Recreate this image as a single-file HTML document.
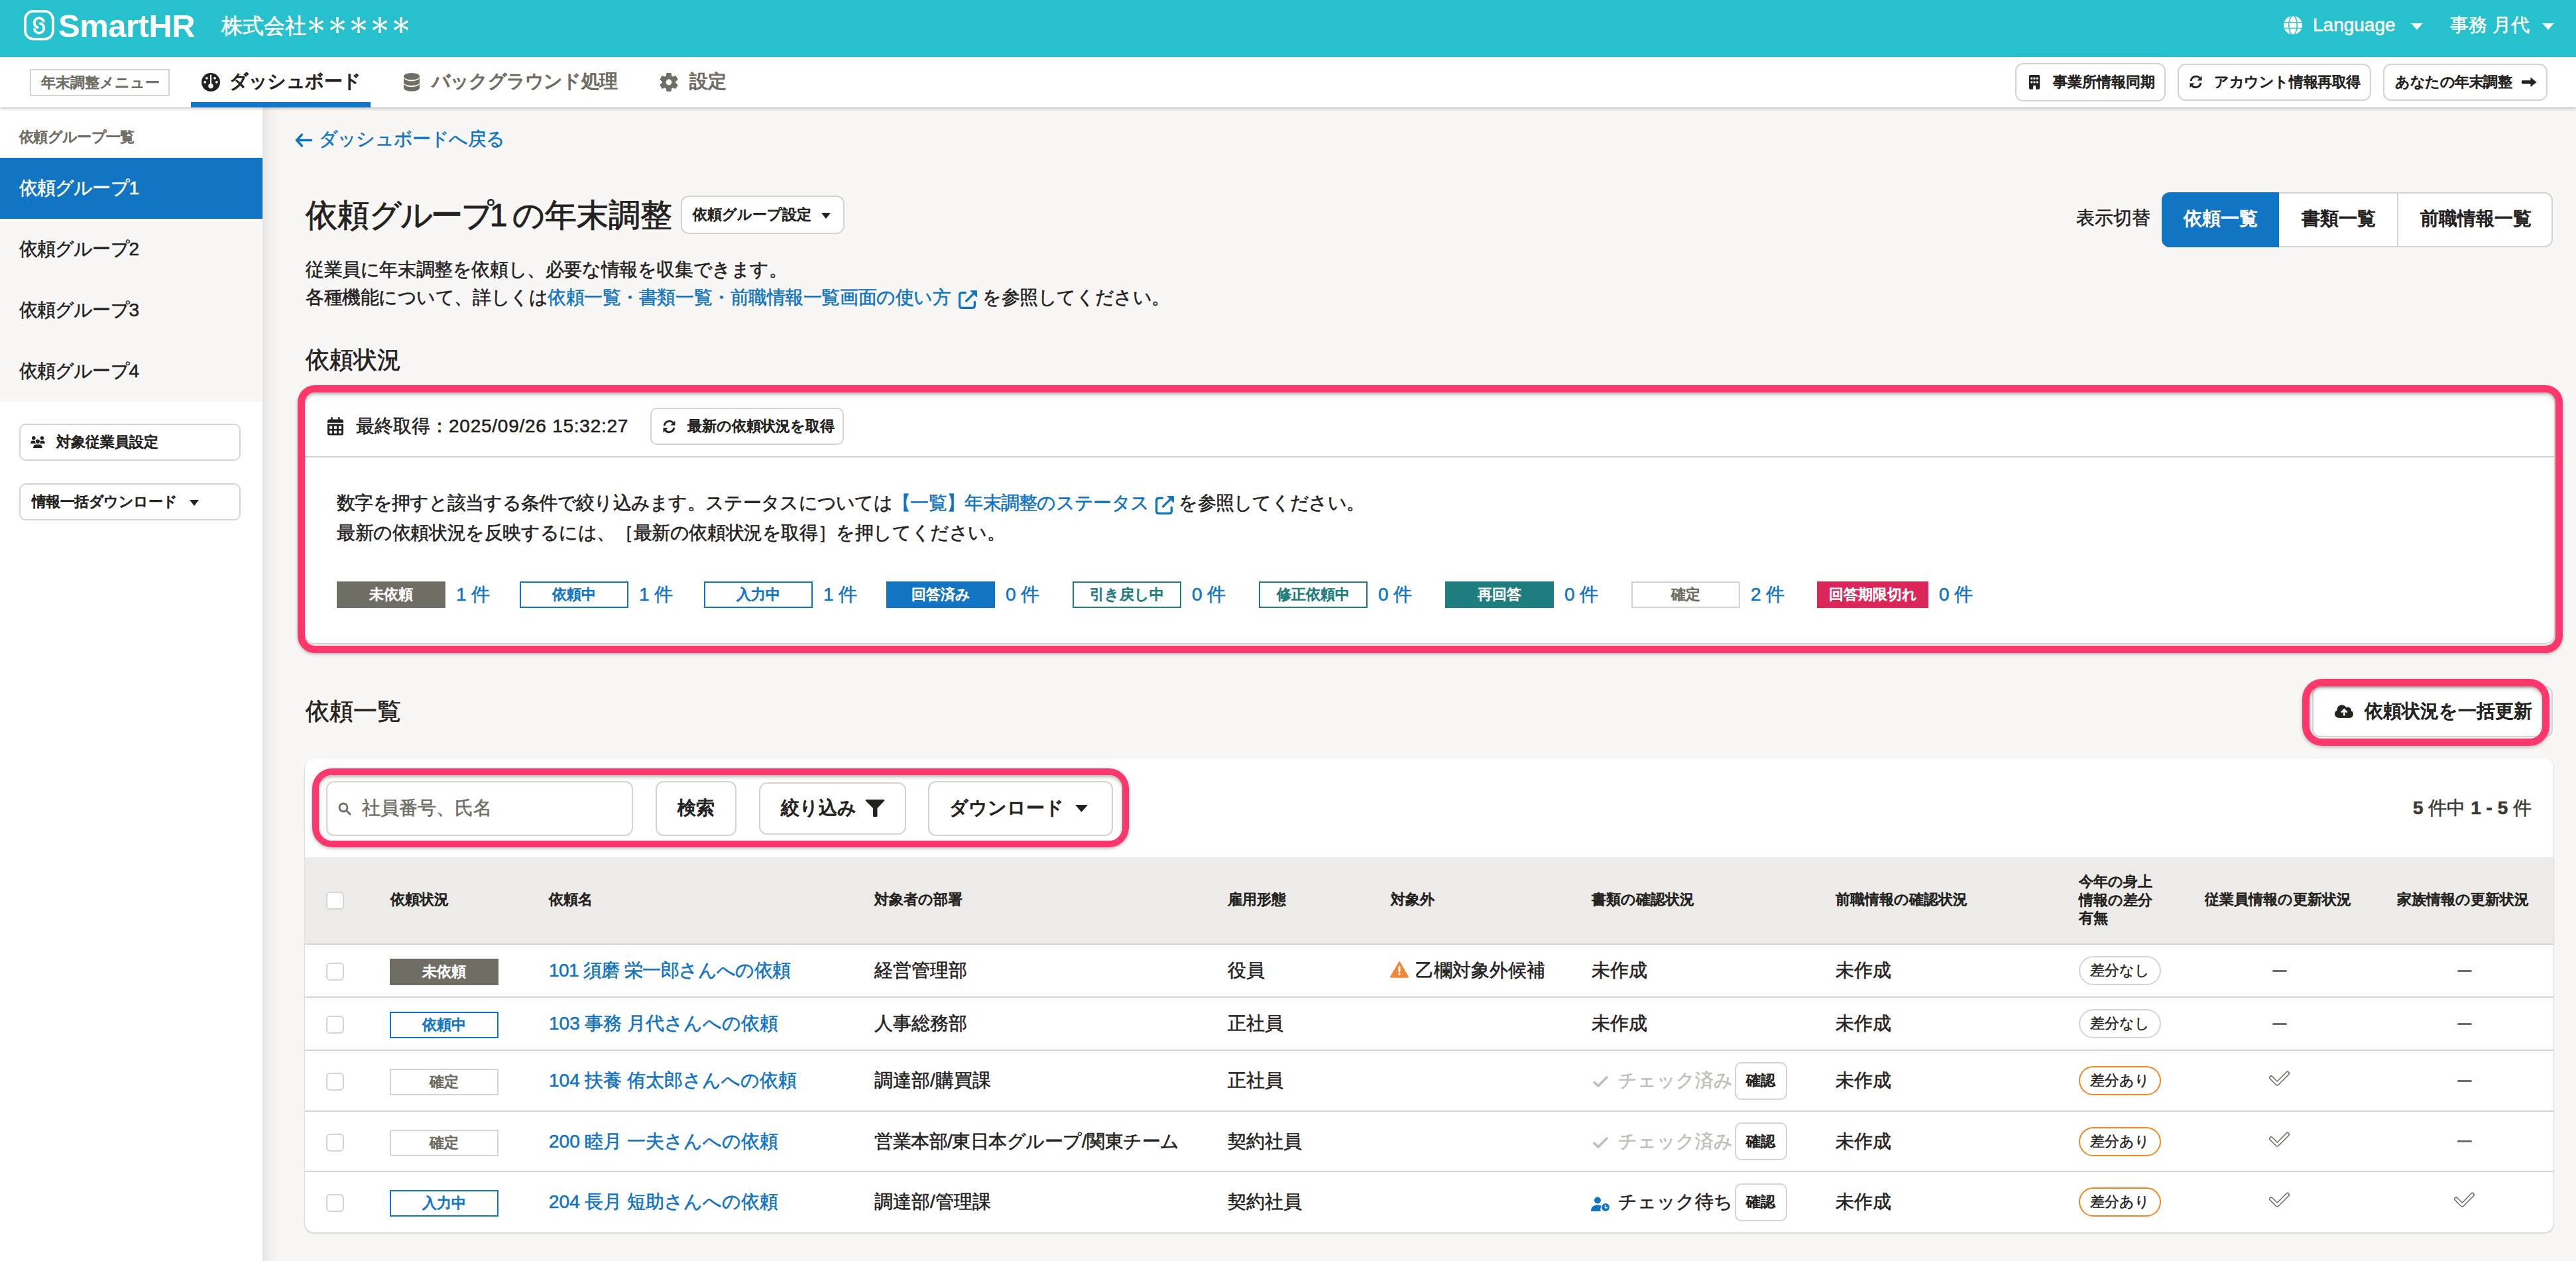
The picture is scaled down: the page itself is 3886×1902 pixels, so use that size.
<!DOCTYPE html><html lang="ja"><head><meta charset="utf-8"><style>
html,body{margin:0;padding:0;width:3886px;height:1902px;overflow:hidden;background:#f8f7f6;font-family:"Liberation Sans",sans-serif;}
.a{position:absolute;}
.t{white-space:nowrap;}
</style></head><body>
<div class="a" style="left:0px;top:162px;width:396.0px;height:1740.0px;background:#fff;"></div>
<div class="a t" style="left:29px;top:192.0px;font-size:22px;line-height:30px;font-weight:700;color:#706d65;font-weight:400;-webkit-text-stroke:1.10px currentColor;letter-spacing:-0.7px;">依頼グループ一覧</div>
<div class="a" style="left:0px;top:238px;width:396.0px;height:368.0px;background:#f8f7f6;"></div>
<div class="a" style="left:0px;top:238px;width:396.0px;height:92.0px;background:#1275c4;"></div>
<div class="a t" style="left:29px;top:266.0px;font-size:28px;line-height:36px;font-weight:400;color:#fff;-webkit-text-stroke:0.56px currentColor;letter-spacing:-0.9px;">依頼グループ1</div>
<div class="a t" style="left:29px;top:358.0px;font-size:28px;line-height:36px;font-weight:400;color:#23221e;-webkit-text-stroke:0.56px currentColor;letter-spacing:-0.9px;">依頼グループ2</div>
<div class="a t" style="left:29px;top:450.0px;font-size:28px;line-height:36px;font-weight:400;color:#23221e;-webkit-text-stroke:0.56px currentColor;letter-spacing:-0.9px;">依頼グループ3</div>
<div class="a t" style="left:29px;top:542.0px;font-size:28px;line-height:36px;font-weight:400;color:#23221e;-webkit-text-stroke:0.56px currentColor;letter-spacing:-0.9px;">依頼グループ4</div>
<div class="a" style="left:29px;top:639px;width:334.0px;height:56.0px;background:#fff;border:2px solid #d6d3d0;border-radius:10px;box-sizing:border-box;"></div>
<svg class="a" style="left:46px;top:657px;" width="22" height="19" viewBox="0 0 22 19"><g fill="#23221e"><circle cx="4.8" cy="3.8" r="2.8"/><circle cx="17.4" cy="3.8" r="2.7"/><path d="M2.2 7.8H6.4Q7.2 7.8 7.5 8.6L8.6 11.9H0L1.1 8.6Q1.4 7.8 2.2 7.8Z"/><path d="M15.6 7.8H19.8Q20.6 7.8 20.9 8.6L22 11.9H13.4L14.5 8.6Q14.8 7.8 15.6 7.8Z"/><circle cx="10.9" cy="8.8" r="3.1" stroke="#fff" stroke-width="1.6" paint-order="stroke"/><path d="M7.8 13.4H14Q16.2 13.4 17 15.6L18 18.9H3.8L4.8 15.6Q5.6 13.4 7.8 13.4Z" stroke="#fff" stroke-width="1.6" paint-order="stroke"/></g></svg>
<div class="a t" style="left:85px;top:652.0px;font-size:22px;line-height:30px;font-weight:700;color:#23221e;font-weight:400;-webkit-text-stroke:1.10px currentColor;">対象従業員設定</div>
<div class="a" style="left:29px;top:729px;width:334.0px;height:56.0px;background:#fff;border:2px solid #d6d3d0;border-radius:10px;box-sizing:border-box;"></div>
<div class="a t" style="left:48px;top:742.0px;font-size:22px;line-height:30px;font-weight:700;color:#23221e;font-weight:400;-webkit-text-stroke:1.10px currentColor;letter-spacing:-0.55px;">情報一括ダウンロード</div>
<svg class="a" style="left:286px;top:754px;" width="14" height="9" viewBox="0 0 14 9"><path d="M0 0H14L7.0 9Z" fill="#23221e"/></svg>
<div class="a" style="left:396px;top:162px;width:34.0px;height:1740.0px;background:linear-gradient(to right, rgba(0,0,0,0.07), rgba(0,0,0,0.02) 40%, rgba(0,0,0,0));"></div>
<svg class="a" style="left:445px;top:201px;" width="26" height="21" viewBox="0 0 26 21"><path d="M10.5 2L2.5 10.5L10.5 19M3 10.5H24.5" fill="none" stroke="#0f73c3" stroke-width="3.4" stroke-linecap="round" stroke-linejoin="round"/></svg>
<div class="a t" style="left:481px;top:192.0px;font-size:28px;line-height:36px;font-weight:400;color:#0f73c3;-webkit-text-stroke:0.56px currentColor;letter-spacing:-0.8px;">ダッシュボードへ戻る</div>
<div class="a t" style="left:461px;top:294.5px;font-size:48px;line-height:60px;font-weight:400;color:#23221e;-webkit-text-stroke:0.96px currentColor;">依頼<span style="letter-spacing:-2.3px">グループ</span><span style="margin-left:-4px">1</span><span style="margin-left:7.5px">の年末調整</span></div>
<div class="a" style="left:1027px;top:295px;width:247.0px;height:57.5px;background:#fff;border:2px solid #d6d3d0;border-radius:12px;box-sizing:border-box;"></div>
<div class="a t" style="left:1045px;top:308.5px;font-size:22px;line-height:30px;font-weight:700;color:#23221e;font-weight:400;-webkit-text-stroke:1.10px currentColor;">依頼グループ設定</div>
<svg class="a" style="left:1239px;top:321px;" width="14" height="9" viewBox="0 0 14 9"><path d="M0 0H14L7.0 9Z" fill="#23221e"/></svg>
<div class="a t" style="left:461px;top:385.5px;font-size:28px;line-height:42px;font-weight:400;color:#23221e;-webkit-text-stroke:0.56px currentColor;letter-spacing:-0.4px;">従業員に年末調整を依頼し、必要な情報を収集できます。</div>
<div class="a t" style="left:461px;top:427.5px;font-size:28px;line-height:42px;font-weight:400;color:#23221e;-webkit-text-stroke:0.56px currentColor;letter-spacing:-0.45px;">各種機能について、詳しくは<span style="color:#0f73c3">依頼一覧・書類一覧・前職情報一覧画面の使い方</span><svg width="28" height="28" viewBox="0 0 28 28" style="vertical-align:top;position:relative;top:10.25px;margin-left:12px;margin-right:8px"><path d="M10.5 3.35H5Q1.65 3.35 1.65 6.7V23Q1.65 26.35 5 26.35H21Q24.35 26.35 24.35 23V17.3" fill="none" stroke="#0f73c3" stroke-width="3.3" stroke-linecap="round"/><path d="M11.6 16L21.5 6.1" stroke="#0f73c3" stroke-width="3.3" stroke-linecap="round"/><path d="M18 0.6H27.4V10Z" fill="#0f73c3" stroke="#0f73c3" stroke-width="1" stroke-linejoin="round"/></svg>を参照してください。</div>
<div class="a t" style="left:3132px;top:311.0px;font-size:28px;line-height:36px;font-weight:400;color:#23221e;-webkit-text-stroke:0.56px currentColor;">表示切替</div>
<div class="a" style="left:3261px;top:289.5px;width:590.0px;height:83.0px;background:#fff;border:2px solid #d6d3d0;border-radius:12px;box-sizing:border-box;overflow:hidden;"></div>
<div class="a" style="left:3261px;top:289.5px;width:177.0px;height:83.0px;background:#1275c4;border-radius:12px 0 0 12px;"></div>
<div class="a" style="left:3616px;top:291.5px;width:2.0px;height:79.0px;background:#d6d3d0;"></div>
<div class="a t" style="left:3294px;top:312.0px;font-size:28px;line-height:36px;font-weight:700;color:#fff;font-weight:400;-webkit-text-stroke:1.20px currentColor;">依頼一覧</div>
<div class="a t" style="left:3472px;top:312.0px;font-size:28px;line-height:36px;font-weight:700;color:#23221e;font-weight:400;-webkit-text-stroke:1.20px currentColor;">書類一覧</div>
<div class="a t" style="left:3651px;top:312.0px;font-size:28px;line-height:36px;font-weight:700;color:#23221e;font-weight:400;-webkit-text-stroke:1.20px currentColor;">前職情報一覧</div>
<div class="a t" style="left:461px;top:519.4px;font-size:36px;line-height:48px;font-weight:400;color:#23221e;-webkit-text-stroke:0.72px currentColor;">依頼状況</div>
<div class="a" style="left:460px;top:591px;width:3393.0px;height:379.0px;background:#fff;border-radius:14px;box-shadow:0 1px 3px rgba(0,0,0,0.25);"></div>
<div class="a" style="left:460px;top:688px;width:3393.0px;height:2.0px;background:#d6d3d0;"></div>
<svg class="a" style="left:494px;top:629px;" width="24" height="28" viewBox="0 0 24 28"><path d="M0 6.5A3 3 0 0 1 3 3.5H21A3 3 0 0 1 24 6.5V8.7H0Z" fill="#23221e"/><rect x="5.2" y="0" width="2.6" height="6" rx="1.3" fill="#23221e"/><rect x="16" y="0" width="2.6" height="6" rx="1.3" fill="#23221e"/><path d="M0 10.5H24V24.6A3 3 0 0 1 21 27.6H3A3 3 0 0 1 0 24.6Z" fill="#23221e"/><g fill="#fff"><rect x="3" y="13.6" width="4.2" height="4.3" rx="1"/><rect x="9.9" y="13.6" width="4.2" height="4.3" rx="1"/><rect x="16.9" y="13.6" width="4.2" height="4.3" rx="1"/><rect x="3" y="20.5" width="4.2" height="4.3" rx="1"/><rect x="9.9" y="20.5" width="4.2" height="4.3" rx="1"/><rect x="16.9" y="20.5" width="4.2" height="4.3" rx="1"/></g></svg>
<div class="a t" style="left:537px;top:625.0px;font-size:28px;line-height:36px;font-weight:400;color:#23221e;-webkit-text-stroke:0.56px currentColor;">最終取得：<span style="letter-spacing:0.75px">2025/09/26 15:32:27</span></div>
<div class="a" style="left:981px;top:615px;width:292.0px;height:56.0px;background:#fff;border:2px solid #d6d3d0;border-radius:10px;box-sizing:border-box;"></div>
<svg class="a" style="left:999px;top:633px;" width="21" height="21" viewBox="0 0 21 21"><path d="M3.2 9A7.5 7.5 0 0 1 16.6 5.2" fill="none" stroke="#23221e" stroke-width="2.8"/><path d="M19.5 1.5V8.5H12.5Z" fill="#23221e"/><path d="M17.8 12A7.5 7.5 0 0 1 4.4 15.8" fill="none" stroke="#23221e" stroke-width="2.8"/><path d="M1.5 19.5V12.5H8.5Z" fill="#23221e"/></svg>
<div class="a t" style="left:1037px;top:628.0px;font-size:22px;line-height:30px;font-weight:700;color:#23221e;font-weight:400;-webkit-text-stroke:1.10px currentColor;">最新の依頼状況を取得</div>
<div class="a t" style="left:508px;top:736.0px;font-size:28px;line-height:45px;font-weight:400;color:#23221e;-webkit-text-stroke:0.56px currentColor;letter-spacing:-0.7px;">数字を押すと該当する条件で絞り込みます。ステータスについては<span style="color:#0f73c3">【一覧】年末調整のステータス</span><svg width="28" height="28" viewBox="0 0 28 28" style="vertical-align:top;position:relative;top:12px;margin-left:10px;margin-right:7px"><path d="M10.5 3.35H5Q1.65 3.35 1.65 6.7V23Q1.65 26.35 5 26.35H21Q24.35 26.35 24.35 23V17.3" fill="none" stroke="#0f73c3" stroke-width="3.3" stroke-linecap="round"/><path d="M11.6 16L21.5 6.1" stroke="#0f73c3" stroke-width="3.3" stroke-linecap="round"/><path d="M18 0.6H27.4V10Z" fill="#0f73c3" stroke="#0f73c3" stroke-width="1" stroke-linejoin="round"/></svg>を参照してください。</div>
<div class="a t" style="left:508px;top:781.0px;font-size:28px;line-height:45px;font-weight:400;color:#23221e;-webkit-text-stroke:0.56px currentColor;letter-spacing:-0.4px;">最新の依頼状況を反映するには、［最新の依頼状況を取得］を押してください。</div>
<div class="a" style="left:508px;top:877px;width:164.0px;height:40.0px;background:#706d65;"></div>
<div class="a t" style="left:508px;top:877px;width:164px;height:40px;line-height:40px;text-align:center;font-size:22px;font-weight:700;color:#fff;font-weight:400;-webkit-text-stroke:1.10px currentColor;">未依頼</div>
<div class="a t" style="left:688px;top:879.0px;font-size:28px;line-height:36px;font-weight:400;color:#0f73c3;-webkit-text-stroke:0.56px currentColor;">1 件</div>
<div class="a" style="left:784px;top:877px;width:164.0px;height:40.0px;background:#fff;border:2px solid #1275c4;box-sizing:border-box;"></div>
<div class="a t" style="left:784px;top:877px;width:164px;height:40px;line-height:40px;text-align:center;font-size:22px;font-weight:700;color:#1275c4;font-weight:400;-webkit-text-stroke:1.10px currentColor;">依頼中</div>
<div class="a t" style="left:964px;top:879.0px;font-size:28px;line-height:36px;font-weight:400;color:#0f73c3;-webkit-text-stroke:0.56px currentColor;">1 件</div>
<div class="a" style="left:1062px;top:877px;width:164.0px;height:40.0px;background:#fff;border:2px solid #1275c4;box-sizing:border-box;"></div>
<div class="a t" style="left:1062px;top:877px;width:164px;height:40px;line-height:40px;text-align:center;font-size:22px;font-weight:700;color:#1275c4;font-weight:400;-webkit-text-stroke:1.10px currentColor;">入力中</div>
<div class="a t" style="left:1242px;top:879.0px;font-size:28px;line-height:36px;font-weight:400;color:#0f73c3;-webkit-text-stroke:0.56px currentColor;">1 件</div>
<div class="a" style="left:1337px;top:877px;width:164.0px;height:40.0px;background:#1275c4;"></div>
<div class="a t" style="left:1337px;top:877px;width:164px;height:40px;line-height:40px;text-align:center;font-size:22px;font-weight:700;color:#fff;font-weight:400;-webkit-text-stroke:1.10px currentColor;">回答済み</div>
<div class="a t" style="left:1517px;top:879.0px;font-size:28px;line-height:36px;font-weight:400;color:#0f73c3;-webkit-text-stroke:0.56px currentColor;">0 件</div>
<div class="a" style="left:1618px;top:877px;width:164.0px;height:40.0px;background:#fff;border:2px solid #1e7d7d;box-sizing:border-box;"></div>
<div class="a t" style="left:1618px;top:877px;width:164px;height:40px;line-height:40px;text-align:center;font-size:22px;font-weight:700;color:#1e7d7d;font-weight:400;-webkit-text-stroke:1.10px currentColor;">引き戻し中</div>
<div class="a t" style="left:1798px;top:879.0px;font-size:28px;line-height:36px;font-weight:400;color:#0f73c3;-webkit-text-stroke:0.56px currentColor;">0 件</div>
<div class="a" style="left:1899px;top:877px;width:164.0px;height:40.0px;background:#fff;border:2px solid #1e7d7d;box-sizing:border-box;"></div>
<div class="a t" style="left:1899px;top:877px;width:164px;height:40px;line-height:40px;text-align:center;font-size:22px;font-weight:700;color:#1e7d7d;font-weight:400;-webkit-text-stroke:1.10px currentColor;">修正依頼中</div>
<div class="a t" style="left:2079px;top:879.0px;font-size:28px;line-height:36px;font-weight:400;color:#0f73c3;-webkit-text-stroke:0.56px currentColor;">0 件</div>
<div class="a" style="left:2180px;top:877px;width:164.0px;height:40.0px;background:#1e7d7d;"></div>
<div class="a t" style="left:2180px;top:877px;width:164px;height:40px;line-height:40px;text-align:center;font-size:22px;font-weight:700;color:#fff;font-weight:400;-webkit-text-stroke:1.10px currentColor;">再回答</div>
<div class="a t" style="left:2360px;top:879.0px;font-size:28px;line-height:36px;font-weight:400;color:#0f73c3;-webkit-text-stroke:0.56px currentColor;">0 件</div>
<div class="a" style="left:2461px;top:877px;width:164.0px;height:40.0px;background:#fff;border:2px solid #d6d3d0;box-sizing:border-box;"></div>
<div class="a t" style="left:2461px;top:877px;width:164px;height:40px;line-height:40px;text-align:center;font-size:22px;font-weight:700;color:#706d65;font-weight:400;-webkit-text-stroke:1.10px currentColor;">確定</div>
<div class="a t" style="left:2641px;top:879.0px;font-size:28px;line-height:36px;font-weight:400;color:#0f73c3;-webkit-text-stroke:0.56px currentColor;">2 件</div>
<div class="a" style="left:2741px;top:877px;width:168.0px;height:40.0px;background:#dc2659;"></div>
<div class="a t" style="left:2741px;top:877px;width:168px;height:40px;line-height:40px;text-align:center;font-size:22px;font-weight:700;color:#fff;font-weight:400;-webkit-text-stroke:1.10px currentColor;">回答期限切れ</div>
<div class="a t" style="left:2925px;top:879.0px;font-size:28px;line-height:36px;font-weight:400;color:#0f73c3;-webkit-text-stroke:0.56px currentColor;">0 件</div>
<div class="a" style="left:449px;top:581px;width:3417.0px;height:403.5px;border:11px solid #fb376c;border-radius:26px;box-sizing:border-box;box-shadow:0 2px 5px rgba(0,0,0,0.25), inset 0 3px 5px rgba(0,0,0,0.28);"></div>
<div class="a t" style="left:461px;top:1048.5px;font-size:36px;line-height:48px;font-weight:400;color:#23221e;-webkit-text-stroke:0.72px currentColor;">依頼一覧</div>
<div class="a" style="left:3488px;top:1034.5px;width:363.0px;height:77.0px;background:#fff;border:2px solid #d6d3d0;border-radius:12px;box-sizing:border-box;"></div>
<svg class="a" style="left:3522px;top:1063px;" width="28" height="20" viewBox="0 0 28 20"><g fill="#23221e"><circle cx="10.8" cy="7.4" r="7.2"/><circle cx="19.8" cy="8.6" r="5.2"/><circle cx="6" cy="13.7" r="6"/><circle cx="22.4" cy="14.2" r="5.6"/><rect x="6" y="9" width="16.5" height="10.9"/></g><path d="M14.3 16.6V7.8M10 11.6L14.3 7.3L18.6 11.6" fill="none" stroke="#fff" stroke-width="2.5" stroke-linejoin="miter"/></svg>
<div class="a t" style="left:3567px;top:1054.5px;font-size:28px;line-height:36px;font-weight:700;color:#23221e;font-weight:400;-webkit-text-stroke:1.20px currentColor;">依頼状況を一括更新</div>
<div class="a" style="left:3473px;top:1024px;width:373.0px;height:101.0px;border:11px solid #fb376c;border-radius:30px;box-sizing:border-box;box-shadow:0 2px 5px rgba(0,0,0,0.25), inset 0 3px 5px rgba(0,0,0,0.28);"></div>
<div class="a" style="left:460px;top:1144px;width:3392.0px;height:715.0px;background:#fff;border-radius:14px;box-shadow:0 1px 3px rgba(0,0,0,0.25);overflow:hidden;"></div>
<div class="a" style="left:492px;top:1178px;width:463.0px;height:82.5px;background:#fff;border:2px solid #d6d3d0;border-radius:12px;box-sizing:border-box;"></div>
<svg class="a" style="left:510px;top:1210px;" width="20" height="20" viewBox="0 0 20 20"><circle cx="8" cy="8" r="6" fill="none" stroke="#706d65" stroke-width="2.8"/><path d="M12.5 12.5L18 18" stroke="#706d65" stroke-width="3" stroke-linecap="round"/></svg>
<div class="a t" style="left:546px;top:1201.0px;font-size:28px;line-height:36px;font-weight:400;color:#706d65;-webkit-text-stroke:0.56px currentColor;">社員番号、氏名</div>
<div class="a" style="left:989px;top:1178px;width:122.0px;height:82.5px;background:#fff;border:2px solid #d6d3d0;border-radius:12px;box-sizing:border-box;"></div>
<div class="a t" style="left:1022px;top:1201.0px;font-size:28px;line-height:36px;font-weight:700;color:#23221e;font-weight:400;-webkit-text-stroke:1.20px currentColor;">検索</div>
<div class="a" style="left:1145px;top:1179.5px;width:222.0px;height:79.0px;background:#fff;border:2px solid #d6d3d0;border-radius:12px;box-sizing:border-box;"></div>
<div class="a t" style="left:1178px;top:1201.0px;font-size:28px;line-height:36px;font-weight:700;color:#23221e;font-weight:400;-webkit-text-stroke:1.20px currentColor;">絞り込み</div>
<svg class="a" style="left:1305px;top:1206px;" width="30" height="26" viewBox="0 0 30 26"><path d="M0.5 1.5A1.5 1.5 0 0 1 2 0H28A1.5 1.5 0 0 1 29.5 1.5L18.5 13V24.5A1.5 1.5 0 0 1 17 26H13.5A1.5 1.5 0 0 1 12 24.5V13Z" fill="#23221e"/></svg>
<div class="a" style="left:1400px;top:1178px;width:279.0px;height:82.5px;background:#fff;border:2px solid #d6d3d0;border-radius:12px;box-sizing:border-box;"></div>
<div class="a t" style="left:1432px;top:1201.0px;font-size:28px;line-height:36px;font-weight:700;color:#23221e;font-weight:400;-webkit-text-stroke:1.20px currentColor;">ダウンロード</div>
<svg class="a" style="left:1622px;top:1214px;" width="19" height="11" viewBox="0 0 19 11"><path d="M0 0H19L9.5 11Z" fill="#23221e"/></svg>
<div class="a" style="left:471px;top:1159px;width:1232.0px;height:119.0px;border:10.5px solid #fb376c;border-radius:30px;box-sizing:border-box;box-shadow:0 2px 5px rgba(0,0,0,0.25), inset 0 3px 5px rgba(0,0,0,0.28);"></div>
<div class="a t" style="right:67px;top:1200.5px;font-size:28px;line-height:36px;font-weight:400;color:#3b3935;text-align:right;-webkit-text-stroke:0.56px currentColor;"><b>5</b> 件中 <b>1 - 5</b> 件</div>
<div class="a" style="left:460px;top:1293px;width:3392.0px;height:131.0px;background:#edebe8;"></div>
<div class="a" style="left:460px;top:1422.5px;width:3392.0px;height:2.5px;background:#d6d3d0;"></div>
<div class="a" style="left:492px;top:1345px;width:27.0px;height:27.0px;background:#fff;border:2px solid #d6d3d0;border-radius:6px;box-sizing:border-box;"></div>
<div class="a t" style="left:589px;top:1342.0px;font-size:22px;line-height:30px;font-weight:700;color:#23221e;font-weight:400;-webkit-text-stroke:1.10px currentColor;">依頼状況</div>
<div class="a t" style="left:828px;top:1342.0px;font-size:22px;line-height:30px;font-weight:700;color:#23221e;font-weight:400;-webkit-text-stroke:1.10px currentColor;">依頼名</div>
<div class="a t" style="left:1319px;top:1342.0px;font-size:22px;line-height:30px;font-weight:700;color:#23221e;font-weight:400;-webkit-text-stroke:1.10px currentColor;">対象者の部署</div>
<div class="a t" style="left:1852px;top:1342.0px;font-size:22px;line-height:30px;font-weight:700;color:#23221e;font-weight:400;-webkit-text-stroke:1.10px currentColor;">雇用形態</div>
<div class="a t" style="left:2098px;top:1342.0px;font-size:22px;line-height:30px;font-weight:700;color:#23221e;font-weight:400;-webkit-text-stroke:1.10px currentColor;">対象外</div>
<div class="a t" style="left:2401px;top:1342.0px;font-size:22px;line-height:30px;font-weight:700;color:#23221e;font-weight:400;-webkit-text-stroke:1.10px currentColor;">書類の確認状況</div>
<div class="a t" style="left:2769px;top:1342.0px;font-size:22px;line-height:30px;font-weight:700;color:#23221e;font-weight:400;-webkit-text-stroke:1.10px currentColor;">前職情報の確認状況</div>
<div class="a t" style="left:3326px;top:1342.0px;font-size:22px;line-height:30px;font-weight:700;color:#23221e;font-weight:400;-webkit-text-stroke:1.10px currentColor;">従業員情報の更新状況</div>
<div class="a t" style="left:3616px;top:1342.0px;font-size:22px;line-height:30px;font-weight:700;color:#23221e;font-weight:400;-webkit-text-stroke:1.10px currentColor;">家族情報の更新状況</div>
<div class="a t" style="left:3136px;top:1316px;font-size:22px;line-height:27.5px;font-weight:700;color:#23221e;font-weight:400;-webkit-text-stroke:1.10px currentColor;">今年の身上<br>情報の差分<br>有無</div>
<div class="a" style="left:492px;top:1452.0px;width:27.0px;height:27.0px;background:#fff;border:2px solid #d6d3d0;border-radius:6px;box-sizing:border-box;"></div>
<div class="a" style="left:588px;top:1446.0px;width:164.0px;height:40.0px;background:#706d65;"></div>
<div class="a t" style="left:588px;top:1446.0px;width:164px;height:40px;line-height:40px;text-align:center;font-size:22px;font-weight:700;color:#fff;font-weight:400;-webkit-text-stroke:1.10px currentColor;">未依頼</div>
<div class="a t" style="left:828px;top:1446.0px;font-size:28px;line-height:36px;font-weight:400;color:#0f73c3;-webkit-text-stroke:0.56px currentColor;letter-spacing:-0.6px;">101 須磨 栄一郎さんへの依頼</div>
<div class="a t" style="left:1319px;top:1446.0px;font-size:28px;line-height:36px;font-weight:400;color:#23221e;-webkit-text-stroke:0.56px currentColor;">経営管理部</div>
<div class="a t" style="left:1852px;top:1446.0px;font-size:28px;line-height:36px;font-weight:400;color:#23221e;-webkit-text-stroke:0.56px currentColor;">役員</div>
<svg class="a" style="left:2097px;top:1450.0px;" width="28" height="25" viewBox="0 0 28 25"><path d="M14 1.5L26.8 23.5H1.2Z" fill="#f0883a" stroke="#f0883a" stroke-width="2.4" stroke-linejoin="round"/><path d="M14 8.5V15" stroke="#fff" stroke-width="3" stroke-linecap="round"/><circle cx="14" cy="19.3" r="1.7" fill="#fff"/></svg>
<div class="a t" style="left:2135px;top:1446.0px;font-size:28px;line-height:36px;font-weight:400;color:#23221e;-webkit-text-stroke:0.56px currentColor;">乙欄対象外候補</div>
<div class="a t" style="left:2401px;top:1446.0px;font-size:28px;line-height:36px;font-weight:400;color:#23221e;-webkit-text-stroke:0.56px currentColor;">未作成</div>
<div class="a t" style="left:2769px;top:1446.0px;font-size:28px;line-height:36px;font-weight:400;color:#23221e;-webkit-text-stroke:0.56px currentColor;">未作成</div>
<div class="a" style="left:3136px;top:1442.0px;width:124.0px;height:44.0px;background:#fff;border:2px solid #d6d3d0;border-radius:22px;box-sizing:border-box;"></div>
<div class="a t" style="left:3136px;top:1442.0px;width:124px;height:44px;line-height:44px;text-align:center;font-size:22px;color:#23221e;-webkit-text-stroke:0.44px currentColor;">差分なし</div>
<div class="a" style="left:3428px;top:1462.5px;width:22.0px;height:3.0px;background:#706d65;border-radius:2px;"></div>
<div class="a" style="left:3707px;top:1462.5px;width:22.0px;height:3.0px;background:#706d65;border-radius:2px;"></div>
<div class="a" style="left:460px;top:1503px;width:3392.0px;height:2.0px;background:#d6d3d0;"></div>
<div class="a" style="left:492px;top:1532.0px;width:27.0px;height:27.0px;background:#fff;border:2px solid #d6d3d0;border-radius:6px;box-sizing:border-box;"></div>
<div class="a" style="left:588px;top:1526.0px;width:164.0px;height:40.0px;background:#fff;border:2px solid #1275c4;box-sizing:border-box;"></div>
<div class="a t" style="left:588px;top:1526.0px;width:164px;height:40px;line-height:40px;text-align:center;font-size:22px;font-weight:700;color:#1275c4;font-weight:400;-webkit-text-stroke:1.10px currentColor;">依頼中</div>
<div class="a t" style="left:828px;top:1526.0px;font-size:28px;line-height:36px;font-weight:400;color:#0f73c3;-webkit-text-stroke:0.56px currentColor;">103 事務 月代さんへの依頼</div>
<div class="a t" style="left:1319px;top:1526.0px;font-size:28px;line-height:36px;font-weight:400;color:#23221e;-webkit-text-stroke:0.56px currentColor;">人事総務部</div>
<div class="a t" style="left:1852px;top:1526.0px;font-size:28px;line-height:36px;font-weight:400;color:#23221e;-webkit-text-stroke:0.56px currentColor;">正社員</div>
<div class="a t" style="left:2401px;top:1526.0px;font-size:28px;line-height:36px;font-weight:400;color:#23221e;-webkit-text-stroke:0.56px currentColor;">未作成</div>
<div class="a t" style="left:2769px;top:1526.0px;font-size:28px;line-height:36px;font-weight:400;color:#23221e;-webkit-text-stroke:0.56px currentColor;">未作成</div>
<div class="a" style="left:3136px;top:1522.0px;width:124.0px;height:44.0px;background:#fff;border:2px solid #d6d3d0;border-radius:22px;box-sizing:border-box;"></div>
<div class="a t" style="left:3136px;top:1522.0px;width:124px;height:44px;line-height:44px;text-align:center;font-size:22px;color:#23221e;-webkit-text-stroke:0.44px currentColor;">差分なし</div>
<div class="a" style="left:3428px;top:1542.5px;width:22.0px;height:3.0px;background:#706d65;border-radius:2px;"></div>
<div class="a" style="left:3707px;top:1542.5px;width:22.0px;height:3.0px;background:#706d65;border-radius:2px;"></div>
<div class="a" style="left:460px;top:1583px;width:3392.0px;height:2.0px;background:#d6d3d0;"></div>
<div class="a" style="left:492px;top:1618.0px;width:27.0px;height:27.0px;background:#fff;border:2px solid #d6d3d0;border-radius:6px;box-sizing:border-box;"></div>
<div class="a" style="left:588px;top:1612.0px;width:164.0px;height:40.0px;background:#fff;border:2px solid #d6d3d0;box-sizing:border-box;"></div>
<div class="a t" style="left:588px;top:1612.0px;width:164px;height:40px;line-height:40px;text-align:center;font-size:22px;font-weight:700;color:#706d65;font-weight:400;-webkit-text-stroke:1.10px currentColor;">確定</div>
<div class="a t" style="left:828px;top:1612.0px;font-size:28px;line-height:36px;font-weight:400;color:#0f73c3;-webkit-text-stroke:0.56px currentColor;">104 扶養 侑太郎さんへの依頼</div>
<div class="a t" style="left:1319px;top:1612.0px;font-size:28px;line-height:36px;font-weight:400;color:#23221e;-webkit-text-stroke:0.56px currentColor;">調達部/購買課</div>
<div class="a t" style="left:1852px;top:1612.0px;font-size:28px;line-height:36px;font-weight:400;color:#23221e;-webkit-text-stroke:0.56px currentColor;">正社員</div>
<svg class="a" style="left:2402px;top:1622.0px;" width="25" height="18" viewBox="0 0 25 18"><path d="M2 9.5L9 16L23 2" fill="none" stroke="#c1bdb7" stroke-width="3.6"/></svg>
<div class="a t" style="left:2441px;top:1612.0px;font-size:28px;line-height:36px;font-weight:400;color:#c1bdb7;-webkit-text-stroke:0.56px currentColor;">チェック済み</div>
<div class="a" style="left:2617px;top:1601.5px;width:79.0px;height:57.0px;background:#fff;border:2px solid #d6d3d0;border-radius:10px;box-sizing:border-box;"></div>
<div class="a t" style="left:2634px;top:1615.0px;font-size:22px;line-height:30px;font-weight:700;color:#23221e;font-weight:400;-webkit-text-stroke:1.10px currentColor;">確認</div>
<div class="a t" style="left:2769px;top:1612.0px;font-size:28px;line-height:36px;font-weight:400;color:#23221e;-webkit-text-stroke:0.56px currentColor;">未作成</div>
<div class="a" style="left:3136px;top:1608.0px;width:124.0px;height:44.0px;background:#fff;border:2px solid #f5851f;border-radius:22px;box-sizing:border-box;"></div>
<div class="a t" style="left:3136px;top:1608.0px;width:124px;height:44px;line-height:44px;text-align:center;font-size:22px;color:#23221e;-webkit-text-stroke:0.44px currentColor;">差分あり</div>
<svg class="a" style="left:3415px;top:1608.0px;" width="48" height="37" viewBox="0 0 48 37"><path d="M11.2 17.5L20.3 26.5L35.8 11" fill="none" stroke="#706d65" stroke-width="6.4" stroke-linecap="round" stroke-linejoin="round"/><path d="M11.2 17.5L20.3 26.5L35.8 11" fill="none" stroke="#fff" stroke-width="3.2" stroke-linecap="round" stroke-linejoin="round"/></svg>
<div class="a" style="left:3707px;top:1628.5px;width:22.0px;height:3.0px;background:#706d65;border-radius:2px;"></div>
<div class="a" style="left:460px;top:1675px;width:3392.0px;height:2.0px;background:#d6d3d0;"></div>
<div class="a" style="left:492px;top:1709.5px;width:27.0px;height:27.0px;background:#fff;border:2px solid #d6d3d0;border-radius:6px;box-sizing:border-box;"></div>
<div class="a" style="left:588px;top:1703.5px;width:164.0px;height:40.0px;background:#fff;border:2px solid #d6d3d0;box-sizing:border-box;"></div>
<div class="a t" style="left:588px;top:1703.5px;width:164px;height:40px;line-height:40px;text-align:center;font-size:22px;font-weight:700;color:#706d65;font-weight:400;-webkit-text-stroke:1.10px currentColor;">確定</div>
<div class="a t" style="left:828px;top:1703.5px;font-size:28px;line-height:36px;font-weight:400;color:#0f73c3;-webkit-text-stroke:0.56px currentColor;">200 睦月 一夫さんへの依頼</div>
<div class="a t" style="left:1319px;top:1703.5px;font-size:28px;line-height:36px;font-weight:400;color:#23221e;-webkit-text-stroke:0.56px currentColor;letter-spacing:-0.5px;">営業本部/東日本グループ/関東チーム</div>
<div class="a t" style="left:1852px;top:1703.5px;font-size:28px;line-height:36px;font-weight:400;color:#23221e;-webkit-text-stroke:0.56px currentColor;">契約社員</div>
<svg class="a" style="left:2402px;top:1713.5px;" width="25" height="18" viewBox="0 0 25 18"><path d="M2 9.5L9 16L23 2" fill="none" stroke="#c1bdb7" stroke-width="3.6"/></svg>
<div class="a t" style="left:2441px;top:1703.5px;font-size:28px;line-height:36px;font-weight:400;color:#c1bdb7;-webkit-text-stroke:0.56px currentColor;">チェック済み</div>
<div class="a" style="left:2617px;top:1693.0px;width:79.0px;height:57.0px;background:#fff;border:2px solid #d6d3d0;border-radius:10px;box-sizing:border-box;"></div>
<div class="a t" style="left:2634px;top:1706.5px;font-size:22px;line-height:30px;font-weight:700;color:#23221e;font-weight:400;-webkit-text-stroke:1.10px currentColor;">確認</div>
<div class="a t" style="left:2769px;top:1703.5px;font-size:28px;line-height:36px;font-weight:400;color:#23221e;-webkit-text-stroke:0.56px currentColor;">未作成</div>
<div class="a" style="left:3136px;top:1699.5px;width:124.0px;height:44.0px;background:#fff;border:2px solid #f5851f;border-radius:22px;box-sizing:border-box;"></div>
<div class="a t" style="left:3136px;top:1699.5px;width:124px;height:44px;line-height:44px;text-align:center;font-size:22px;color:#23221e;-webkit-text-stroke:0.44px currentColor;">差分あり</div>
<svg class="a" style="left:3415px;top:1699.5px;" width="48" height="37" viewBox="0 0 48 37"><path d="M11.2 17.5L20.3 26.5L35.8 11" fill="none" stroke="#706d65" stroke-width="6.4" stroke-linecap="round" stroke-linejoin="round"/><path d="M11.2 17.5L20.3 26.5L35.8 11" fill="none" stroke="#fff" stroke-width="3.2" stroke-linecap="round" stroke-linejoin="round"/></svg>
<div class="a" style="left:3707px;top:1720.0px;width:22.0px;height:3.0px;background:#706d65;border-radius:2px;"></div>
<div class="a" style="left:460px;top:1766px;width:3392.0px;height:2.0px;background:#d6d3d0;"></div>
<div class="a" style="left:492px;top:1801.0px;width:27.0px;height:27.0px;background:#fff;border:2px solid #d6d3d0;border-radius:6px;box-sizing:border-box;"></div>
<div class="a" style="left:588px;top:1795.0px;width:164.0px;height:40.0px;background:#fff;border:2px solid #1275c4;box-sizing:border-box;"></div>
<div class="a t" style="left:588px;top:1795.0px;width:164px;height:40px;line-height:40px;text-align:center;font-size:22px;font-weight:700;color:#1275c4;font-weight:400;-webkit-text-stroke:1.10px currentColor;">入力中</div>
<div class="a t" style="left:828px;top:1795.0px;font-size:28px;line-height:36px;font-weight:400;color:#0f73c3;-webkit-text-stroke:0.56px currentColor;">204 長月 短助さんへの依頼</div>
<div class="a t" style="left:1319px;top:1795.0px;font-size:28px;line-height:36px;font-weight:400;color:#23221e;-webkit-text-stroke:0.56px currentColor;">調達部/管理課</div>
<div class="a t" style="left:1852px;top:1795.0px;font-size:28px;line-height:36px;font-weight:400;color:#23221e;-webkit-text-stroke:0.56px currentColor;">契約社員</div>
<svg class="a" style="left:2400px;top:1804.7px;" width="29" height="23" viewBox="0 0 29 23"><circle cx="10" cy="5.5" r="5" fill="#1275c4"/><path d="M0 22c0-6 3.5-9.5 10-9.5c2.5 0 4.5.5 6 1.5a8 8 0 0 0 -1 8z" fill="#1275c4"/><circle cx="22" cy="16" r="6.5" fill="#1275c4" stroke="#fff" stroke-width="1.2"/><path d="M21.6 12.6V16.6H24.8" fill="none" stroke="#fff" stroke-width="1.6"/></svg>
<div class="a t" style="left:2441px;top:1795.0px;font-size:28px;line-height:36px;font-weight:400;color:#23221e;-webkit-text-stroke:0.56px currentColor;">チェック待ち</div>
<div class="a" style="left:2617px;top:1784.5px;width:79.0px;height:57.0px;background:#fff;border:2px solid #d6d3d0;border-radius:10px;box-sizing:border-box;"></div>
<div class="a t" style="left:2634px;top:1798.0px;font-size:22px;line-height:30px;font-weight:700;color:#23221e;font-weight:400;-webkit-text-stroke:1.10px currentColor;">確認</div>
<div class="a t" style="left:2769px;top:1795.0px;font-size:28px;line-height:36px;font-weight:400;color:#23221e;-webkit-text-stroke:0.56px currentColor;">未作成</div>
<div class="a" style="left:3136px;top:1791.0px;width:124.0px;height:44.0px;background:#fff;border:2px solid #f5851f;border-radius:22px;box-sizing:border-box;"></div>
<div class="a t" style="left:3136px;top:1791.0px;width:124px;height:44px;line-height:44px;text-align:center;font-size:22px;color:#23221e;-webkit-text-stroke:0.44px currentColor;">差分あり</div>
<svg class="a" style="left:3415px;top:1791.0px;" width="48" height="37" viewBox="0 0 48 37"><path d="M11.2 17.5L20.3 26.5L35.8 11" fill="none" stroke="#706d65" stroke-width="6.4" stroke-linecap="round" stroke-linejoin="round"/><path d="M11.2 17.5L20.3 26.5L35.8 11" fill="none" stroke="#fff" stroke-width="3.2" stroke-linecap="round" stroke-linejoin="round"/></svg>
<svg class="a" style="left:3694px;top:1791.0px;" width="48" height="37" viewBox="0 0 48 37"><path d="M11.2 17.5L20.3 26.5L35.8 11" fill="none" stroke="#706d65" stroke-width="6.4" stroke-linecap="round" stroke-linejoin="round"/><path d="M11.2 17.5L20.3 26.5L35.8 11" fill="none" stroke="#fff" stroke-width="3.2" stroke-linecap="round" stroke-linejoin="round"/></svg>
<div class="a" style="left:0px;top:86px;width:3886.0px;height:76.0px;background:#fff;box-shadow:0 1px 5px rgba(0,0,0,0.32);"></div>
<div class="a" style="left:0px;top:0px;width:3886.0px;height:86.0px;background:#26c1cc;"></div>
<svg class="a" style="left:36px;top:15px;" width="46" height="46" viewBox="0 0 46 46"><rect x="1.9" y="1.9" width="42" height="42" rx="12.5" fill="none" stroke="#fff" stroke-width="3.8"/><path d="M29.8 16.9A7.3 7.3 0 1 0 20.7 26.4" fill="none" stroke="#fff" stroke-width="3.8" stroke-linecap="round"/><path d="M24.8 20.4A7.3 7.3 0 1 1 15.9 29.0" fill="none" stroke="#fff" stroke-width="3.8" stroke-linecap="round"/></svg>
<div class="a t" style="left:88px;top:9.0px;font-size:49px;line-height:60px;font-weight:700;color:#fff;font-weight:400;-webkit-text-stroke:1.20px currentColor;letter-spacing:-0.5px;-webkit-text-stroke:0;font-weight:700;">SmartHR</div>
<div class="a t" style="left:334px;top:18.5px;font-size:32px;line-height:40px;font-weight:400;color:#fff;-webkit-text-stroke:0.64px currentColor;">株式会社</div>
<svg class="a" style="left:465px;top:25.799999999999997px;" width="24" height="24" viewBox="0 0 24 24"><path d="M14.10 0.10L12.90 12.00L14.10 23.90L9.90 23.90L11.10 12.00L9.90 0.10Z" fill="#fff"/><path d="M23.36 7.87L12.45 12.78L2.74 19.77L0.64 16.13L11.55 11.22L21.26 4.23Z" fill="#fff"/><path d="M21.26 19.77L11.55 12.78L0.64 7.87L2.74 4.23L12.45 11.22L23.36 16.13Z" fill="#fff"/></svg>
<svg class="a" style="left:497px;top:25.799999999999997px;" width="24" height="24" viewBox="0 0 24 24"><path d="M14.10 0.10L12.90 12.00L14.10 23.90L9.90 23.90L11.10 12.00L9.90 0.10Z" fill="#fff"/><path d="M23.36 7.87L12.45 12.78L2.74 19.77L0.64 16.13L11.55 11.22L21.26 4.23Z" fill="#fff"/><path d="M21.26 19.77L11.55 12.78L0.64 7.87L2.74 4.23L12.45 11.22L23.36 16.13Z" fill="#fff"/></svg>
<svg class="a" style="left:529px;top:25.799999999999997px;" width="24" height="24" viewBox="0 0 24 24"><path d="M14.10 0.10L12.90 12.00L14.10 23.90L9.90 23.90L11.10 12.00L9.90 0.10Z" fill="#fff"/><path d="M23.36 7.87L12.45 12.78L2.74 19.77L0.64 16.13L11.55 11.22L21.26 4.23Z" fill="#fff"/><path d="M21.26 19.77L11.55 12.78L0.64 7.87L2.74 4.23L12.45 11.22L23.36 16.13Z" fill="#fff"/></svg>
<svg class="a" style="left:561px;top:25.799999999999997px;" width="24" height="24" viewBox="0 0 24 24"><path d="M14.10 0.10L12.90 12.00L14.10 23.90L9.90 23.90L11.10 12.00L9.90 0.10Z" fill="#fff"/><path d="M23.36 7.87L12.45 12.78L2.74 19.77L0.64 16.13L11.55 11.22L21.26 4.23Z" fill="#fff"/><path d="M21.26 19.77L11.55 12.78L0.64 7.87L2.74 4.23L12.45 11.22L23.36 16.13Z" fill="#fff"/></svg>
<svg class="a" style="left:593px;top:25.799999999999997px;" width="24" height="24" viewBox="0 0 24 24"><path d="M14.10 0.10L12.90 12.00L14.10 23.90L9.90 23.90L11.10 12.00L9.90 0.10Z" fill="#fff"/><path d="M23.36 7.87L12.45 12.78L2.74 19.77L0.64 16.13L11.55 11.22L21.26 4.23Z" fill="#fff"/><path d="M21.26 19.77L11.55 12.78L0.64 7.87L2.74 4.23L12.45 11.22L23.36 16.13Z" fill="#fff"/></svg>
<svg class="a" style="left:3445px;top:24px;" width="28" height="28" viewBox="0 0 28 28"><circle cx="14" cy="14" r="14" fill="#fff"/><ellipse cx="14" cy="14" rx="6.2" ry="14.6" fill="none" stroke="#26c1cc" stroke-width="1.5"/><path d="M0 9.8H28M0 18.5H28" stroke="#26c1cc" stroke-width="1.5"/></svg>
<div class="a t" style="left:3489px;top:20.0px;font-size:28px;line-height:36px;font-weight:400;color:#fff;-webkit-text-stroke:0.56px currentColor;">Language</div>
<svg class="a" style="left:3637px;top:35px;" width="18" height="10" viewBox="0 0 18 10"><path d="M0 0H18L9.0 10Z" fill="#fff"/></svg>
<div class="a t" style="left:3696px;top:19.5px;font-size:28px;line-height:36px;font-weight:400;color:#fff;-webkit-text-stroke:0.56px currentColor;">事務 月代</div>
<svg class="a" style="left:3835px;top:35px;" width="18" height="10" viewBox="0 0 18 10"><path d="M0 0H18L9.0 10Z" fill="#fff"/></svg>
<div class="a" style="left:44.5px;top:104px;width:211.0px;height:41.0px;border:2px solid #d6d3d0;box-sizing:border-box;"></div>
<div class="a t" style="left:62px;top:109.5px;font-size:22px;line-height:30px;font-weight:700;color:#706d65;font-weight:400;-webkit-text-stroke:1.10px currentColor;">年末調整メニュー</div>
<div class="a" style="left:288px;top:154px;width:271.0px;height:8.0px;background:#1275c4;"></div>
<svg class="a" style="left:304px;top:110px;" width="28" height="28" viewBox="0 0 28 28"><circle cx="14" cy="14" r="14" fill="#23221e"/><g fill="#fff"><circle cx="7.9" cy="7.8" r="1.9"/><circle cx="20.1" cy="7.8" r="1.9"/><circle cx="5.2" cy="13.8" r="1.9"/><circle cx="22.8" cy="13.8" r="1.9"/><rect x="12.95" y="2.8" width="2.1" height="17"/><circle cx="14" cy="19.8" r="3.7"/></g></svg>
<div class="a t" style="left:346px;top:105.0px;font-size:28px;line-height:36px;font-weight:700;color:#23221e;font-weight:400;-webkit-text-stroke:1.20px currentColor;letter-spacing:-0.5px;">ダッシュボード</div>
<svg class="a" style="left:609px;top:110px;" width="24" height="28" viewBox="0 0 24 28"><ellipse cx="12" cy="5.3" rx="12" ry="5.3" fill="#706d65"/><path d="M0 6.6A12 6 0 0 0 24 6.6V14.2A12 5.1 0 0 1 0 14.2Z" fill="#706d65"/><path d="M0 15.6A12 5.6 0 0 0 24 15.6V22.6A12 5.2 0 0 1 0 22.6Z" fill="#706d65"/></svg>
<div class="a t" style="left:651px;top:105.0px;font-size:28px;line-height:36px;font-weight:700;color:#706d65;font-weight:400;-webkit-text-stroke:1.20px currentColor;letter-spacing:-0.8px;">バックグラウンド処理</div>
<svg class="a" style="left:995px;top:110px;" width="28" height="28" viewBox="0 0 28 28"><path d="M10.37 4.04L10.90 0.55L17.10 0.55L17.63 4.04Q18.30 6.55 20.81 5.88L24.09 4.59L27.20 9.97L24.44 12.16Q22.60 14.00 24.44 15.84L27.20 18.03L24.09 23.41L20.81 22.12Q18.30 21.45 17.63 23.96L17.10 27.45L10.90 27.45L10.37 23.96Q9.70 21.45 7.19 22.12L3.91 23.41L0.80 18.03L3.56 15.84Q5.40 14.00 3.56 12.16L0.80 9.97L3.91 4.59L7.19 5.88Q9.70 6.55 10.37 4.04Z" fill="#706d65" stroke="#706d65" stroke-width="1" stroke-linejoin="round"/><circle cx="14" cy="14" r="4.4" fill="#fff"/></svg>
<div class="a t" style="left:1040px;top:105.0px;font-size:28px;line-height:36px;font-weight:700;color:#706d65;font-weight:400;-webkit-text-stroke:1.20px currentColor;">設定</div>
<div class="a" style="left:3040px;top:95px;width:227.0px;height:57.5px;background:#fff;border:2px solid #d6d3d0;border-radius:12px;box-sizing:border-box;"></div>
<svg class="a" style="left:3061px;top:113px;" width="16" height="22" viewBox="0 0 16 22"><rect x="0" y="0" width="16" height="21.7" rx="1.8" fill="#23221e"/><g fill="#fff"><rect x="2.3" y="3.8" width="3" height="3" rx="0.8"/><rect x="6.5" y="3.8" width="3" height="3" rx="0.8"/><rect x="10.8" y="3.8" width="3" height="3" rx="0.8"/><rect x="2.3" y="9.4" width="3" height="3" rx="0.8"/><rect x="6.5" y="9.4" width="3" height="3" rx="0.8"/><rect x="10.8" y="9.4" width="3" height="3" rx="0.8"/><path d="M6 22V17.9A2.1 2.1 0 0 1 10.2 17.9V22Z"/></g></svg>
<div class="a t" style="left:3097px;top:108.5px;font-size:22px;line-height:30px;font-weight:700;color:#23221e;font-weight:400;-webkit-text-stroke:1.10px currentColor;">事業所情報同期</div>
<div class="a" style="left:3284.5px;top:95.5px;width:292.5px;height:56.5px;background:#fff;border:2px solid #d6d3d0;border-radius:12px;box-sizing:border-box;"></div>
<svg class="a" style="left:3302px;top:113px;" width="21" height="21" viewBox="0 0 21 21"><path d="M3.2 9A7.5 7.5 0 0 1 16.6 5.2" fill="none" stroke="#23221e" stroke-width="2.8"/><path d="M19.5 1.5V8.5H12.5Z" fill="#23221e"/><path d="M17.8 12A7.5 7.5 0 0 1 4.4 15.8" fill="none" stroke="#23221e" stroke-width="2.8"/><path d="M1.5 19.5V12.5H8.5Z" fill="#23221e"/></svg>
<div class="a t" style="left:3340px;top:108.5px;font-size:22px;line-height:30px;font-weight:700;color:#23221e;font-weight:400;-webkit-text-stroke:1.10px currentColor;letter-spacing:-0.4px;">アカウント情報再取得</div>
<div class="a" style="left:3594.5px;top:95.5px;width:248.5px;height:56.5px;background:#fff;border:2px solid #d6d3d0;border-radius:12px;box-sizing:border-box;"></div>
<div class="a t" style="left:3613px;top:108.5px;font-size:22px;line-height:30px;font-weight:700;color:#23221e;font-weight:400;-webkit-text-stroke:1.10px currentColor;letter-spacing:-0.5px;">あなたの年末調整</div>
<svg class="a" style="left:3804px;top:117px;" width="23" height="14" viewBox="0 0 23 14"><rect x="0" y="4.2" width="15" height="5.4" rx="1" fill="#23221e"/><path d="M13.8 0.2L22.2 6.9L13.8 13.6Z" fill="#23221e" stroke="#23221e" stroke-width="0.6" stroke-linejoin="round"/></svg>
</body></html>
